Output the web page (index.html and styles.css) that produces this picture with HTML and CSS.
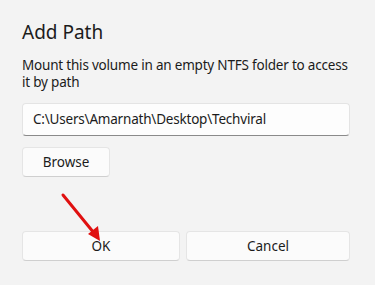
FILE: index.html
```html
<!DOCTYPE html>
<html lang="en">
<head>
    <meta charset="UTF-8">
    <title>Add Path</title>
    <link rel="stylesheet" href="styles.css">
</head>
<body>
    <div class="dialog">
        <h2 class="title">Add Path</h2>
        <p class="desc">Mount this volume in an empty NTFS folder to access it by path</p>

        <div class="field">C:\Users\Amarnath\Desktop\Techviral</div>
        <button class="btn browse">Browse</button>

        <div class="actions">
            <button class="btn">OK</button>
            <button class="btn">Cancel</button>
        </div>

        <!-- annotation arrow -->
        <svg class="arrow" width="60" height="60" viewBox="0 0 60 60">
            <line x1="8" y1="7" x2="39" y2="45" stroke="#e01010" stroke-width="3" stroke-linecap="round"/>
            <polygon points="45,53 33,46 43,38" fill="#e01010"/>
        </svg>
    </div>
</body>
</html>
```

FILE: styles.css
```css
body {
    margin: 0;
    background: #f3f3f3;
    font-family: 'Noto Sans', 'Open Sans', sans-serif;
    color: #1b1b1b;
}

.dialog {
    position: relative;
    height: 285px;
    padding: 18px 25px 0 22px;
    box-sizing: border-box;
}

.title {
    margin: 0;
    font-size: 19px;
    font-weight: 400;
    line-height: 28px;
}

.desc {
    margin: 11px 0 0;
    font-size: 13.5px;
    line-height: 17px;
    letter-spacing: -0.2px;
}

.field {
    margin-top: 12px;
    height: 31px;
    line-height: 31px;
    padding: 0 10px;
    background: #fdfdfd;
    border: 1px solid #e4e4e4;
    border-bottom-color: #8a8a8a;
    border-radius: 4px;
    font-size: 13.5px;
    letter-spacing: -0.2px;
}

.btn {
    font-family: inherit;
    font-size: 13.5px;
    color: #1b1b1b;
    background: #fbfbfb;
    border: 1px solid #e5e5e5;
    border-bottom-color: #cfcfcf;
    border-radius: 4px;
    height: 30px;
    padding: 0;
}

.browse {
    display: block;
    margin-top: 11px;
    width: 88px;
}

.actions {
    display: grid;
    grid-template-columns: 158px 1fr;
    gap: 6px;
    margin-top: 54px;
}

.arrow {
    position: absolute;
    left: 55px;
    top: 188px;
}
```
